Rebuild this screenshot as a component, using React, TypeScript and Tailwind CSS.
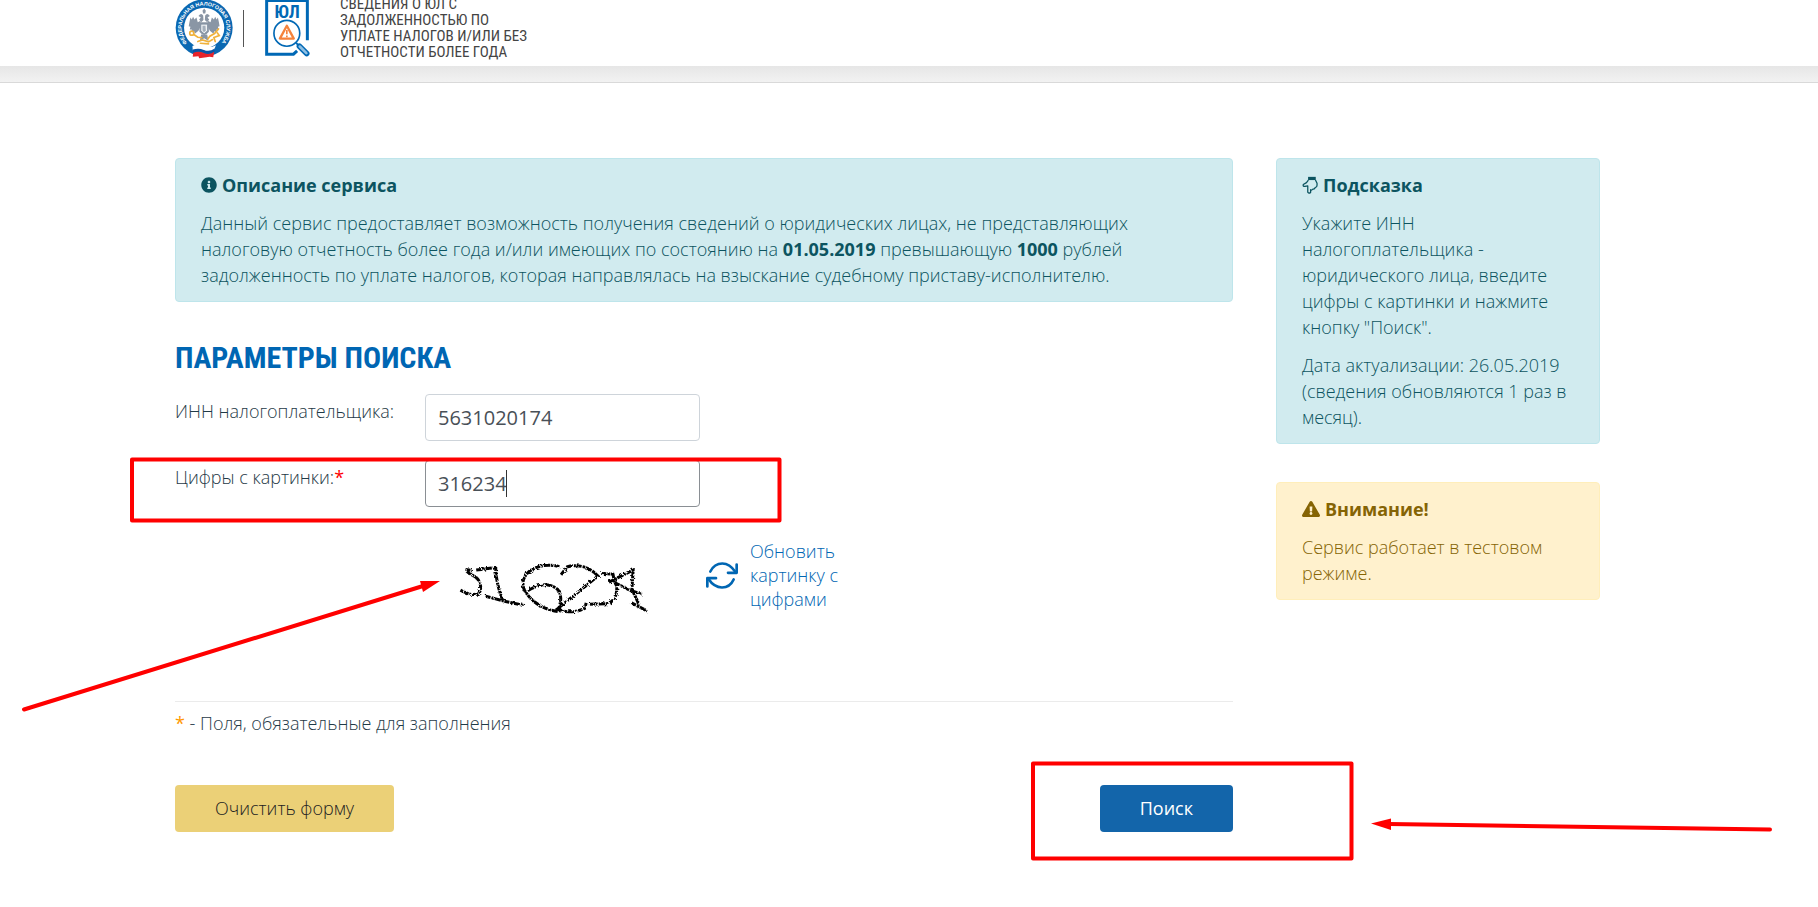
import React, { useState } from "react";
import { FaExclamationTriangle, FaInfoCircle } from "react-icons/fa";

function TaxServiceEmblem() {
  return (
    <svg viewBox="48 -6 176 182" className="mb-px h-[61px] w-[59px] shrink-0" role="img" aria-label="ФНС">
      <defs>
        <path id="ring-text" d="M85 128 A 67 67 0 1 1 185 128" />
      </defs>
      <circle cx="135" cy="83" r="85" fill="#0a68b2" />
      <circle cx="135" cy="83" r="60" fill="#fff" />
      <text
        fill="#fff"
        fontSize="16"
        fontWeight="700"
        fontFamily='"Liberation Sans", sans-serif'
      >
        <textPath href="#ring-text" startOffset="0">
          ФЕДЕРАЛЬНАЯ НАЛОГОВАЯ СЛУЖБА
        </textPath>
      </text>

      {/* Eagle */}
      <g fill="#8a96a5">
        <path d="M124 62 L116 66 L112 52 L106 58 L102 50 L98 58 L94 52 L91 66 L89 78 L94 80 L92 88 L98 88 L98 96 L105 93 L107 101 L118 92 L124 80 Z" />
        <path d="M146 62 L154 66 L158 52 L164 58 L168 50 L172 58 L176 52 L179 66 L181 78 L176 80 L178 88 L172 88 L172 96 L165 93 L163 101 L152 92 L146 80 Z" />
        <path d="M118 48 Q126 36 132 46 L133 60 L126 66 L120 58 L125 52 Z" />
        <path d="M152 48 Q144 36 138 46 L137 60 L144 66 L150 58 L145 52 Z" />
        <path d="M130 32 L135 25 L140 32 L138 40 H132 Z" />
        <path d="M121 66 H149 V95 Q135 114 121 95 Z" />
        <path d="M126 103 H144 L148 122 L135 114 L122 122 Z" />
      </g>
      <path d="M125 72 H145 V92 L135 101 L125 92 Z" fill="#eef1f4" stroke="#76879a" strokeWidth="2" />
      <path d="M130 77 L139 77 L140 92 L134 96 L130 90 Z" fill="#a4afbb" />
      <g fill="none" stroke="#f0b23c" strokeWidth="5" strokeLinecap="round">
        <circle cx="98" cy="99" r="6" />
        <path d="M104 103 L116 111 L128 112" />
        <path d="M116 124 L130 119 L148 125 L160 118" />
        <path d="M178 86 L166 100 L152 108 L146 116" />
        <path d="M174 98 L180 106 L164 112 L168 124" />
        <path d="M124 129 L148 131" />
      </g>

      {/* Ribbon */}
      <path d="M100 137 Q118 129 134 137 T170 135 L164 151 Q150 156 134 151 T101 150 Z" fill="#fff" />
      <path d="M101 148 Q118 142 134 149 T167 145 L165 155 Q150 164 134 157 T102 158 Z" fill="#0a55a5" />
      <path d="M102 158 Q118 151 134 158 T165 154 L162 171 Q150 168 142 171 L120 174 L118 168 L101 169 Z" fill="#e8232a" />
    </svg>
  );
}

function ServiceIcon() {
  return (
    <svg viewBox="312 -3 142 180" className="h-[60px] w-[47px] shrink-0" aria-hidden="true">
      <path
        d="M443 124 V4 H320 V166 H401 L412 156"
        fill="none"
        stroke="#0068b5"
        strokeWidth="9"
      />
      <text
        x="382"
        y="58"
        textAnchor="middle"
        fontSize="54"
        fontWeight="700"
        fill="#0068b5"
        fontFamily='"Roboto Condensed", "Liberation Sans Narrow", "Open Sans", sans-serif'
      >
        ЮЛ
      </text>
      <circle cx="381" cy="103" r="39" fill="#fff" stroke="#0068b5" strokeWidth="5" />
      <path d="M381 80 L402 119 H360 Z" fill="none" stroke="#f5833c" strokeWidth="7" strokeLinejoin="round" />
      <path d="M381 93 V106 M381 110 V115" stroke="#f5833c" strokeWidth="5" />
      <path d="M409 132 L418 141" stroke="#0068b5" strokeWidth="6" />
      <path d="M419 142 L441 164" stroke="#0068b5" strokeWidth="17" strokeLinecap="round" />
      <path d="M420 143 L440 163" stroke="#8fc0e4" strokeWidth="8" strokeLinecap="round" />
    </svg>
  );
}

function HandIcon() {
  return (
    <svg viewBox="124 76 50 58" className="h-[19px] w-4" aria-hidden="true">
      <path d="M143 78 H167 V88 H143 Z" fill="#0c5460" />
      <path
        d="M144 88 L138 96 L128 102 Q126 108 133 108 L142 106 V126 Q146 132 151 126 V118 Q155 121 158 116 Q164 117 165 112 Q171 111 171 104 V98 L166 88"
        fill="none"
        stroke="#0c5460"
        strokeWidth="4"
        strokeLinejoin="round"
      />
    </svg>
  );
}

function RefreshIcon() {
  return (
    <svg
      viewBox="828 98 96 86"
      className="h-[29px] w-8 shrink-0"
      fill="none"
      stroke="#0066b3"
      strokeWidth="8"
      strokeLinecap="round"
      strokeLinejoin="round"
      aria-hidden="true"
    >
      <path d="M841 129 Q853 105 877 105 Q899 105 917 131" />
      <path d="M920 108 V133 H894" />
      <path d="M911 153 Q900 177 876 177 Q852 177 835 151" />
      <path d="M832 174 V149 H858" />
    </svg>
  );
}

function CaptchaPicture() {
  return (
    <svg
      viewBox="85 90 575 170"
      className="mt-[26px] h-[57px] w-[193px] shrink-0"
      role="img"
      aria-label="Картинка с цифрами"
    >
      <defs>
        <filter id="noise" x="-5%" y="-10%" width="110%" height="120%">
          <feTurbulence type="fractalNoise" baseFrequency="0.12" numOctaves="2" seed="4" result="n" />
          <feDisplacementMap in="SourceGraphic" in2="n" scale="11" />
        </filter>
      </defs>
      <g
        fill="none"
        stroke="#000"
        strokeWidth="9"
        strokeDasharray="15 3 8 2 19 3 6 2"
        filter="url(#noise)"
      >
        <path d="M110 118 L132 122 M142 120 L202 112" />
        <path d="M114 124 L146 146 Q160 166 153 184 Q138 204 95 180" />
        <path d="M200 108 Q200 156 221 210" />
        <path d="M170 198 L222 212 L287 226" />
        <path d="M390 110 Q340 96 300 124 Q272 150 286 180 Q316 232 385 244" />
        <path d="M385 242 Q403 200 385 178 Q350 148 295 182" />
        <path d="M395 134 L414 110 Q468 98 505 138 L384 236 Q424 254 466 234 L470 218" />
        <path d="M515 130 L550 132 L553 150 L561 168 Q564 208 535 220 L478 222" />
        <path d="M538 156 L610 120 L606 182" />
        <path d="M556 158 L604 182 L636 192" />
        <path d="M608 180 L628 224 M605 218 L652 242" />
      </g>
    </svg>
  );
}

// Marks drawn over the page: two frames and two arrows
function Annotations() {
  return (
    <svg
      className="pointer-events-none absolute top-0 left-0 h-px w-px overflow-visible"
      fill="none"
      stroke="#ff0000"
      strokeWidth="4"
      strokeLinejoin="round"
      strokeLinecap="round"
      aria-hidden="true"
    >
      <rect x="-43" y="376.500" width="647.500" height="61" />
      <rect x="858" y="680.500" width="318.500" height="95" />
      <path d="M-151 626.500 L248 503" />
      <path d="M265 498 L245 498 L248 509 Z" fill="#ff0000" stroke="none" />
      <path d="M1595 746.500 L1214 741" />
      <path d="M1196 740.500 L1216 735.500 V747 Z" fill="#ff0000" stroke="none" />
    </svg>
  );
}

function Notice({
  tone,
  icon,
  title,
  children,
}: {
  tone: "info" | "warning";
  icon: React.ReactNode;
  title: string;
  children: React.ReactNode;
}) {
  const colors =
    tone === "info"
      ? "border-[#bee5eb] bg-[#d1ebef] text-[#0c5460]"
      : "border-[#ffeeba] bg-[#fff1cd] text-[#856404]";
  return (
    <section className={`flex flex-col gap-3 rounded border px-[25px] py-[13px] ${colors}`}>
      <h2 className="flex items-center gap-[5px] font-bold">
        {icon}
        {title}
      </h2>
      {children}
    </section>
  );
}

export default function App() {
  const [inn, setInn] = useState("5631020174");
  const [digits, setDigits] = useState("316234");

  const clear = () => {
    setInn("");
    setDigits("");
  };

  return (
    <div className='min-h-screen bg-white font-["Open_Sans","Noto_Sans",sans-serif] text-[18px] leading-[26px] font-light text-[#1f3a47]'>
      <header className="flex h-[66px] flex-col justify-end bg-white pr-[43px] pb-[6px]">
        <div className="mx-auto flex w-full max-w-[1425px] items-end">
          <TaxServiceEmblem />
          <div className="mx-[9px] mb-[13px] h-[37px] w-px bg-[#555]" />
          <div className="pb-[2px] pl-[11px]">
            <ServiceIcon />
          </div>
          <p className='pl-[29px] font-["Roboto_Condensed","Liberation_Sans_Narrow","DejaVu_Sans_Condensed",sans-serif] text-[15px] leading-4 font-normal whitespace-nowrap text-[#444] uppercase'>
            Сведения о ЮЛ с
            <br />
            задолженностью по
            <br />
            уплате налогов и/или без
            <br />
            отчетности более года
          </p>
        </div>
      </header>
      <div className="h-[17px] border-b border-[#d9d9d9] bg-gradient-to-b from-[#e6e6e6] to-[#f2f2f2]" />

      <div className="pr-[43px]">
        <div className="relative mx-auto flex max-w-[1425px] items-start gap-[43px] pt-[75px]">
          <main className="min-w-0 flex-1">
            <Notice tone="info" icon={<FaInfoCircle size={16} />} title="Описание сервиса">
              <p>
                Данный сервис предоставляет возможность получения сведений о юридических лицах, не
                представляющих налоговую отчетность более года и/или имеющих по состоянию на{" "}
                <b className="font-bold">01.05.2019</b> превышающую <b className="font-bold">1000</b>{" "}
                рублей задолженность по уплате налогов, которая направлялась на взыскание судебному
                приставу-исполнителю.
              </p>
            </Notice>

            <form onSubmit={(e) => e.preventDefault()}>
              <h1 className='mt-9 font-["Roboto_Condensed","Liberation_Sans_Narrow","DejaVu_Sans_Condensed",sans-serif] text-[30px] leading-10 font-bold text-[#0066b3] uppercase'>
                Параметры поиска
              </h1>

              <div className="mt-4 flex items-start">
                <label htmlFor="inn" className="w-[250px] shrink-0 pt-1">
                  ИНН налогоплательщика:
                </label>
                <input
                  id="inn"
                  value={inn}
                  onChange={(e) => setInn(e.target.value)}
                  className="h-[47px] w-[275px] rounded border border-[#ced4da] px-3 text-xl font-normal text-[#495057] outline-none"
                />
              </div>

              <div className="mt-[19px] flex items-start">
                <label htmlFor="digits" className="w-[250px] shrink-0 pt-1">
                  Цифры с картинки:<span className="font-normal text-[#ff0000]">*</span>
                </label>
                <div className="relative">
                  <input
                    id="digits"
                    value={digits}
                    onChange={(e) => setDigits(e.target.value)}
                    className="h-[47px] w-[275px] rounded border border-[#8a8f94] px-3 text-xl font-normal text-[#495057] outline-none"
                  />
                  <span className="absolute top-[10px] left-[81px] h-[27px] w-px bg-[#333]" />
                </div>
              </div>

              <div className="mt-8 ml-[282px] flex h-[72px] items-center">
                <CaptchaPicture />
                <a
                  href="#captcha"
                  className="ml-14 flex items-center gap-3 leading-6 text-[#0066b3]"
                >
                  <RefreshIcon />
                  <span className="w-[100px]">Обновить картинку с цифрами</span>
                </a>
              </div>

              <hr className="mt-[90px] border-[#ebebeb]" />
              <p className="mt-2">
                <span className="font-normal text-[#ff9800]">*</span> - Поля, обязательные для заполнения
              </p>

              <div className="mt-[49px] flex justify-between">
                <button
                  type="button"
                  onClick={clear}
                  className="h-[47px] rounded bg-[#ebd077] px-10 pb-0.5 text-[#222]"
                >
                  Очистить форму
                </button>
                <button type="submit" className="h-[47px] rounded bg-[#1365aa] px-10 pb-0.5 font-normal text-white">
                  Поиск
                </button>
              </div>
            </form>
          </main>

          <aside className="flex w-[324px] shrink-0 flex-col gap-[38px]">
            <Notice tone="info" icon={<HandIcon />} title="Подсказка">
              <p>
                Укажите ИНН налогоплательщика - юридического лица, введите цифры с картинки и нажмите
                кнопку "Поиск".
              </p>
              <p>Дата актуализации: 26.05.2019 (сведения обновляются 1 раз в месяц).</p>
            </Notice>
            <Notice tone="warning" icon={<FaExclamationTriangle size={18} />} title="Внимание!">
              <p>Сервис работает в тестовом режиме.</p>
            </Notice>
          </aside>

          <Annotations />
        </div>
      </div>
    </div>
  );
}
